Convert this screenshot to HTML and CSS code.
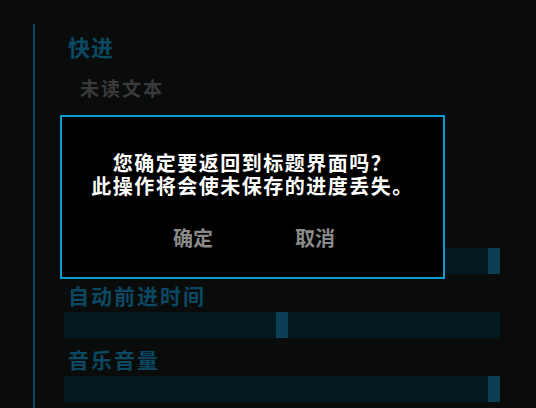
FILE: index.html
```html
<!DOCTYPE html>
<html lang="zh-CN">
<head>
<meta charset="utf-8">
<title>设置</title>
<link rel="stylesheet" href="styles.css">
</head>
<body>
<div class="screen">
  <div class="rule"></div>
  <div class="prefs">
    <div class="label first">快进</div>
    <div class="option">未读文本</div>
    <div class="spacer"></div>
    <div class="label">文字速度</div>
    <div class="bar"><div class="thumb" style="left: 424px"></div></div>
    <div class="label">自动前进时间</div>
    <div class="bar"><div class="thumb" style="left: 212px"></div></div>
    <div class="label">音乐音量</div>
    <div class="bar"><div class="thumb" style="left: 424px"></div></div>
  </div>
</div>
<div class="confirm">
  <div class="message">
    <div class="line">您确定要返回到标题界面吗？</div>
    <div class="line">此操作将会使未保存的进度丢失。</div>
  </div>
  <div class="buttons">
    <span class="btn">确定</span>
    <span class="btn">取消</span>
  </div>
</div>
</body>
</html>
```
FILE: styles.css
```css
html, body {
  margin: 0;
  padding: 0;
  background: #0a0c0c;
  width: 536px;
  height: 408px;
  overflow: hidden;
  font-family: "Noto Sans CJK SC", "Noto Sans", sans-serif;
}
.screen {
  display: flex;
  height: 408px;
}
.rule {
  width: 2px;
  margin-left: 33px;
  margin-top: 24px;
  background: #0b4a66;
  flex: none;
}
.prefs {
  margin-left: 29px;
  width: 436px;
  display: flex;
  flex-direction: column;
}
.label {
  margin-left: 4px;
  font-size: 21px;
  line-height: 24px;
  height: 24px;
  font-weight: 700;
  color: #0b4862;
  letter-spacing: 2px;
  margin-top: 9px;
  margin-bottom: 5px;
}
.label.first {
  margin-top: 34px;
  font-size: 22px;
  letter-spacing: 1px;
}
.option {
  margin-left: 16px;
  margin-top: 14px;
  font-size: 19px;
  line-height: 22px;
  height: 22px;
  font-weight: 700;
  letter-spacing: 2px;
  color: #3a3a3a;
}
.spacer {
  height: 111px;
}
.bar {
  position: relative;
  height: 26px;
  background: #03191f;
  flex: none;
}
.thumb {
  position: absolute;
  top: 0;
  width: 12px;
  height: 26px;
  background: #0b3f55;
}
.confirm {
  position: absolute;
  left: 60px;
  top: 115px;
  width: 381px;
  height: 160px;
  border: 2px solid #0a9bd0;
  background: #000;
  display: flex;
  flex-direction: column;
  align-items: center;
}
.message {
  margin-top: 34px;
  display: flex;
  flex-direction: column;
  align-items: center;
}
.line {
  font-size: 20px;
  line-height: 23px;
  height: 23px;
  letter-spacing: 1.5px;
  font-weight: 700;
  color: #fff;
  white-space: nowrap;
}
.buttons {
  display: flex;
  gap: 82px;
  margin-top: 29px;
  padding-left: 3px;
}
.btn {
  font-size: 20px;
  line-height: 23px;
  font-weight: 700;
  color: #8a8a8a;
}
```
